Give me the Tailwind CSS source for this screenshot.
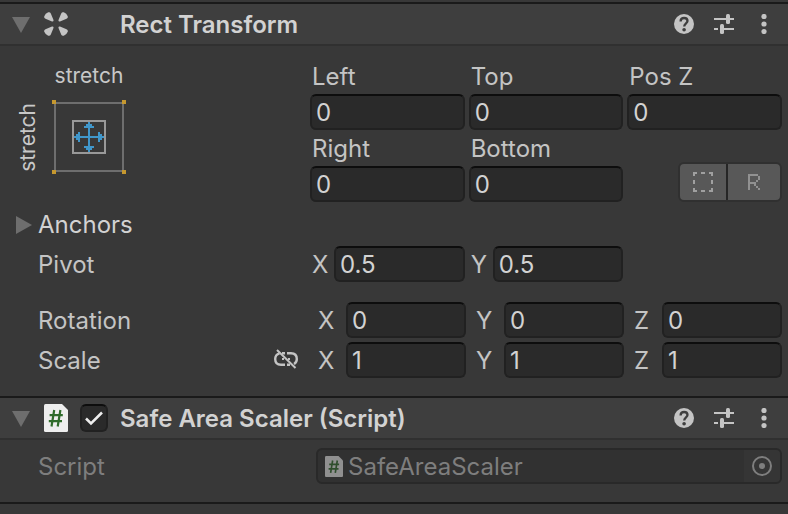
<!DOCTYPE html>
<html lang="en">
<head>
<meta charset="utf-8">
<meta name="viewport" content="width=device-width, initial-scale=1">
<title>Inspector</title>
<script src="https://cdn.jsdelivr.net/npm/@tailwindcss/browser@4"></script>
</head>
<body class="min-h-screen bg-[#383838] font-['Inter',sans-serif] text-2xl leading-[38px] text-[#c4c4c4]">
<svg class="hidden" aria-hidden="true">
  <symbol id="fold-down" viewBox="0 0 18 16"><path d="M0 0H18L9 16Z" fill="#6e6e6e"/></symbol>
  <symbol id="help" viewBox="0 0 20 20"><circle cx="10" cy="10" r="10" fill="#c4c4c4"/><path d="M6.6 7.4C6.6 5.2 8 4 10.100 4S13.500 5.200 13.500 7.100C13.500 9.400 10.200 9.500 10.200 12.600" fill="none" stroke="#3e3e3e" stroke-width="2.300"/><circle cx="10.100" cy="15.800" r="1.800" fill="#3e3e3e"/></symbol>
  <symbol id="sliders" viewBox="0 0 20 20"><path d="M0 5H12M16 5H20M0 15H4M10 15H20" stroke="#c4c4c4" stroke-width="2"/><rect x="12" y="0" width="4" height="10" rx="1.500" fill="#c4c4c4"/><rect x="6" y="10" width="4" height="10" rx="1.500" fill="#c4c4c4"/></symbol>
  <symbol id="dots" viewBox="0 0 6 20"><g fill="#c4c4c4"><circle cx="3" cy="2.500" r="2.600"/><circle cx="3" cy="10" r="2.600"/><circle cx="3" cy="17.500" r="2.600"/></g></symbol>
  <symbol id="script-file" viewBox="0 0 24 28"><path d="M1.500 0H18L24 6V26.500Q24 28 22.500 28H1.500Q0 28 0 26.500V1.500Q0 0 1.500 0Z" fill="#eeeeee"/><path d="M10.200 6L7.500 22.500M16.400 6L13.700 22.500M5.600 11.200H18.800M4.800 17.200H18" fill="none" stroke="#2f6b2b" stroke-width="2.200"/></symbol>
</svg>
<main class="pt-0.5">
  <section class="border-t-2 border-[#1a1a1a]">
    <header class="flex h-[42px] items-center border-b-2 border-[#303030] bg-[#3e3e3e] pr-[21px] pl-3">
      <button type="button" aria-label="Collapse Rect Transform" class="w-8 shrink-0"><svg class="mt-0.5 h-4 w-[18px]"><use href="#fold-down"/></svg></button>
      <svg class="size-6 shrink-0" viewBox="0 0 24 24" fill="#c4c4c4" aria-hidden="true">
        <path id="petal" d="M9.500 8L6.800 1.500Q6 -0.300 4.200 0.300Q1.300 1.300 0.300 4.200Q-0.300 6 1.500 6.800L8 9.500Q9.800 9.800 9.500 8Z"/>
        <use href="#petal" transform="matrix(-1 0 0 1 24 0)"/><use href="#petal" transform="matrix(1 0 0 -1 0 24)"/><use href="#petal" transform="rotate(180 12 12)"/>
      </svg>
      <h2 class="ml-[52px] flex-1 truncate pt-0.5 font-semibold text-[#d2d2d2]">Rect Transform</h2>
      <div class="flex items-center gap-5">
        <button type="button" aria-label="Help"><svg class="block size-5"><use href="#help"/></svg></button>
        <button type="button" aria-label="Presets"><svg class="block size-5"><use href="#sliders"/></svg></button>
        <button type="button" aria-label="More" class="pl-[7px]"><svg class="block h-5 w-1.5"><use href="#dots"/></svg></button>
      </div>
    </header>
    <div class="flex flex-col gap-1 pt-3 pr-1.5 pb-[18px]">
      <div class="flex">
        <div class="w-[310px] shrink-0">
          <button type="button" aria-label="Anchor presets" class="grid grid-cols-[52px_74px] grid-rows-[42px_74px] text-[21px] text-[#c8c8c8]">
            <span class="col-start-2 leading-9">stretch</span>
            <span class="col-start-1 row-start-2 ml-1 rotate-180 place-self-center text-center leading-9 [writing-mode:vertical-rl]">stretch</span>
            <svg class="col-start-2 row-start-2 size-[74px]" viewBox="0 0 74 74" shape-rendering="crispEdges">
              <path d="M3 3H71V71H3Z" fill="none" stroke="#6e6e6e" stroke-width="2"/>
              <path d="M0 0H4V4H0ZM70 0H74V4H70ZM0 70H4V74H0ZM70 70H74V74H70Z" fill="#c6982f"/>
              <path d="M21 21H53V53H21Z" fill="none" stroke="#999999" stroke-width="2"/>
              <path id="arrow" d="M36 38V28H32V26H34V24H36V22H38V24H40V26H42V28H38V38Z" fill="#4097cb"/>
              <use href="#arrow" transform="rotate(90 37 37)"/><use href="#arrow" transform="rotate(180 37 37)"/><use href="#arrow" transform="rotate(270 37 37)"/>
            </svg>
          </button>
        </div>
        <div class="grid flex-1 grid-cols-3 gap-x-1">
          <div><label for="left" class="block h-9 pl-0.5">Left</label><input id="left" value="0" class="block h-9 w-full rounded-md border-2 border-[#212121] border-t-[#0d0d0d] bg-[#2a2a2a] px-1 pt-0.5 text-[#d2d2d2]"></div>
          <div><label for="top" class="block h-9 pl-0.5">Top</label><input id="top" value="0" class="block h-9 w-full rounded-md border-2 border-[#212121] border-t-[#0d0d0d] bg-[#2a2a2a] px-1 pt-0.5 text-[#d2d2d2]"></div>
          <div><label for="posz" class="block h-9 pl-0.5">Pos Z</label><input id="posz" value="0" class="block h-9 w-full rounded-md border-2 border-[#212121] border-t-[#0d0d0d] bg-[#2a2a2a] px-1 pt-0.5 text-[#d2d2d2]"></div>
          <div><label for="right" class="block h-9 pl-0.5">Right</label><input id="right" value="0" class="block h-9 w-full rounded-md border-2 border-[#212121] border-t-[#0d0d0d] bg-[#2a2a2a] px-1 pt-0.5 text-[#d2d2d2]"></div>
          <div><label for="bottom" class="block h-9 pl-0.5">Bottom</label><input id="bottom" value="0" class="block h-9 w-full rounded-md border-2 border-[#212121] border-t-[#0d0d0d] bg-[#2a2a2a] px-1 pt-0.5 text-[#d2d2d2]"></div>
          <div class="flex h-10 self-end justify-self-end overflow-hidden rounded-md border-2 border-[#303030] bg-[#585858]">
            <button type="button" aria-label="Blueprint mode" class="flex w-12 items-center justify-center border-r-2 border-[#262626]">
              <svg class="size-5" viewBox="0 0 20 20" fill="none" stroke="#a0a0a0" stroke-width="2" shape-rendering="crispEdges"><path d="M1 4V1H4M16 1H19V4M19 16V19H16M4 19H1V16M8 1H12M8 19H12M1 8V12M19 8V12"/></svg>
            </button>
            <button type="button" aria-label="Raw edit mode" class="flex w-[52px] items-center justify-center">
              <svg class="h-4 w-3" viewBox="0 0 12 16" fill="#919191" shape-rendering="crispEdges"><path d="M0 0H10V2H2V8H8V10H2V16H0ZM10 2H12V6H10ZM8 6H10V8H8ZM6 10H8V12H10V14H12V16H10V14H8V12H6Z"/></svg>
            </button>
          </div>
        </div>
      </div>
      <button type="button" class="flex h-9 items-center self-start pt-0.5 pl-4 text-[#d2d2d2]"><svg class="mr-1.5 h-[18px] w-4" viewBox="0 0 16 18"><path d="M0 0L16 9L0 18Z" fill="#6e6e6e"/></svg>Anchors</button>
      <div class="flex h-9">
        <span class="w-[310px] shrink-0 pl-[38px]">Pivot</span>
        <div class="grid flex-1 grid-cols-3 gap-x-1">
          <div class="flex"><label for="pivx" class="w-6 shrink-0 pl-0.5">X</label><input id="pivx" value="0.5" class="h-9 w-full min-w-0 rounded-md border-2 border-[#212121] border-t-[#0d0d0d] bg-[#2a2a2a] px-1 pt-0.5 text-[#d2d2d2]"></div>
          <div class="flex"><label for="pivy" class="w-6 shrink-0 pl-0.5">Y</label><input id="pivy" value="0.5" class="h-9 w-full min-w-0 rounded-md border-2 border-[#212121] border-t-[#0d0d0d] bg-[#2a2a2a] px-1 pt-0.5 text-[#d2d2d2]"></div>
        </div>
      </div>
      <div class="mt-4 flex h-9">
        <span class="w-[318px] shrink-0 pl-[38px]">Rotation</span>
        <div class="grid flex-1 grid-cols-3 gap-x-2.5">
          <div class="flex"><label for="rotx" class="w-7 shrink-0">X</label><input id="rotx" value="0" class="h-9 w-full min-w-0 rounded-md border-2 border-[#212121] border-t-[#0d0d0d] bg-[#2a2a2a] px-1 pt-0.5 text-[#d2d2d2]"></div>
          <div class="flex"><label for="roty" class="w-7 shrink-0">Y</label><input id="roty" value="0" class="h-9 w-full min-w-0 rounded-md border-2 border-[#212121] border-t-[#0d0d0d] bg-[#2a2a2a] px-1 pt-0.5 text-[#d2d2d2]"></div>
          <div class="flex"><label for="rotz" class="w-7 shrink-0">Z</label><input id="rotz" value="0" class="h-9 w-full min-w-0 rounded-md border-2 border-[#212121] border-t-[#0d0d0d] bg-[#2a2a2a] px-1 pt-0.5 text-[#d2d2d2]"></div>
        </div>
      </div>
      <div class="flex h-9">
        <div class="flex w-[318px] shrink-0 justify-between pr-5 pl-[38px]">
          <span>Scale</span>
          <button type="button" aria-label="Constrain proportions" class="h-[34px]"><svg class="block h-5 w-6" viewBox="0 0 24 20" fill="none" stroke="#c4c4c4" stroke-width="2.400"><path d="M5.500 4.300Q1.200 5.500 1.200 10Q1.200 15.800 7 15.800H11M8 4.200H11M13 4.200H17Q22.800 4.200 22.800 10Q22.800 13.500 20 15M13 15.800H16"/><path d="M8 10H10M14 10H16M3 1L21.500 19" stroke-width="2"/></svg></button>
        </div>
        <div class="grid flex-1 grid-cols-3 gap-x-2.5">
          <div class="flex"><label for="sclx" class="w-7 shrink-0">X</label><input id="sclx" value="1" class="h-9 w-full min-w-0 rounded-md border-2 border-[#212121] border-t-[#0d0d0d] bg-[#2a2a2a] px-1 pt-0.5 text-[#d2d2d2]"></div>
          <div class="flex"><label for="scly" class="w-7 shrink-0">Y</label><input id="scly" value="1" class="h-9 w-full min-w-0 rounded-md border-2 border-[#212121] border-t-[#0d0d0d] bg-[#2a2a2a] px-1 pt-0.5 text-[#d2d2d2]"></div>
          <div class="flex"><label for="sclz" class="w-7 shrink-0">Z</label><input id="sclz" value="1" class="h-9 w-full min-w-0 rounded-md border-2 border-[#212121] border-t-[#0d0d0d] bg-[#2a2a2a] px-1 pt-0.5 text-[#d2d2d2]"></div>
        </div>
      </div>
    </div>
  </section>
  <section class="border-y-2 border-[#1a1a1a]">
    <header class="flex h-[42px] items-center border-b-2 border-[#303030] bg-[#3e3e3e] pr-[21px] pl-3">
      <button type="button" aria-label="Collapse Safe Area Scaler" class="w-8 shrink-0"><svg class="mt-0.5 h-4 w-[18px]"><use href="#fold-down"/></svg></button>
      <svg class="h-7 w-6 shrink-0" aria-hidden="true"><use href="#script-file"/></svg>
      <div class="ml-3 grid size-7 shrink-0">
        <input id="enabled" type="checkbox" checked class="peer col-start-1 row-start-1 size-7 appearance-none rounded-md border-2 border-[#212121] border-t-[#0d0d0d] bg-[#2a2a2a]">
        <svg class="pointer-events-none invisible col-start-1 row-start-1 size-7 peer-checked:visible" viewBox="0 0 28 28" fill="none" stroke="#eeeeee" stroke-width="2.500"><path d="M6 14.500L11 19.500L22 8.500"/></svg>
      </div>
      <h2 class="ml-3 flex-1 truncate pt-0.5 font-semibold text-[#d2d2d2]"><label for="enabled">Safe Area Scaler (Script)</label></h2>
      <div class="flex items-center gap-5">
        <button type="button" aria-label="Help"><svg class="block size-5"><use href="#help"/></svg></button>
        <button type="button" aria-label="Presets"><svg class="block size-5"><use href="#sliders"/></svg></button>
        <button type="button" aria-label="More" class="pl-[7px]"><svg class="block h-5 w-1.5"><use href="#dots"/></svg></button>
      </div>
    </header>
    <div class="flex pt-2 pr-1.5 pb-[18px] text-[#7e7e7e]">
      <label for="script" class="h-9 w-[316px] shrink-0 pl-[38px]">Script</label>
      <div class="flex h-9 flex-1 items-center overflow-hidden rounded-md border-2 border-[#292929] bg-[#313131] pl-[7px]">
        <svg class="h-[21px] w-[18px] shrink-0 opacity-50" aria-hidden="true"><use href="#script-file"/></svg>
        <input id="script" value="SafeAreaScaler" disabled class="ml-[5px] h-8 w-full min-w-0 flex-1 pt-0.5">
        <button type="button" aria-label="Select script" disabled class="flex h-8 w-9 shrink-0 items-center justify-center bg-[#353535]"><svg class="size-5" viewBox="0 0 20 20"><circle cx="10" cy="10" r="9" fill="none" stroke="#7e7e7e" stroke-width="2"/><circle cx="10" cy="10" r="3" fill="#7e7e7e"/></svg></button>
      </div>
    </div>
  </section>
</main>
</body>
</html>
